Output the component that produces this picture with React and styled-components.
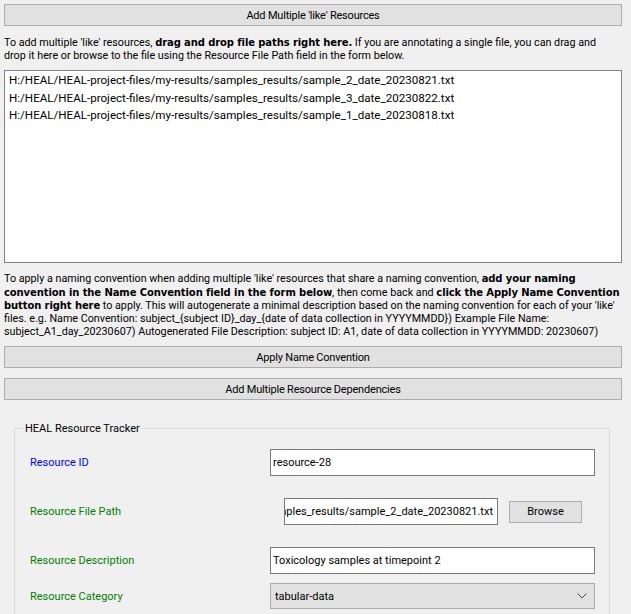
import React from 'react';
import styled, { createGlobalStyle } from 'styled-components';

const GlobalStyle = createGlobalStyle`
  html, body {
    margin: 0;
    padding: 0;
    background: #f0f0f0;
  }
  body {
    font-family: Roboto, "Liberation Sans", sans-serif;
    color: #000;
  }
`;

const Page = styled.div`
  width: 631px;
  height: 614px;
  overflow: hidden;
  box-sizing: border-box;
  padding: 4px 9px 0 4px;
  background: #f0f0f0;
`;

const WideButton = styled.div`
  height: 22px;
  box-sizing: border-box;
  margin-top: ${p => p.top || 0}px;
  border: 1px solid #adadad;
  background: #e1e1e1;
  display: flex;
  align-items: center;
  justify-content: center;
  font-size: 11px;
  letter-spacing: -0.2px;
`;

const Hint = styled.div`
  margin-top: ${p => p.top || 0}px;
  font-size: 10.75px;
  line-height: 13.2px;
`;

const HintLine = styled.span`
  display: block;
  white-space: nowrap;
`;

const Strong = styled.b`
  font-family: "DejaVu Sans", sans-serif;
  font-weight: 700;
  font-size: 10px;
  letter-spacing: -0.1px;
`;

const ListBox = styled.div`
  height: 193px;
  box-sizing: border-box;
  margin-top: 8px;
  border: 1px solid #828282;
  background: #fff;
  padding: 1px 0 0 4px;
`;

const ListItem = styled.div`
  font-size: 11.6px;
  line-height: 17.5px;
  white-space: nowrap;
`;

const Group = styled.fieldset`
  margin: 22px 0 0 10px;
  width: 596px;
  box-sizing: border-box;
  border: 1px solid #dcdcdc;
  padding: 6px 14px 0 15px;
  height: 200px;
`;

const GroupTitle = styled.legend`
  font-size: 11px;
  padding: 0 1px;
  margin-left: -6px;
  color: #000;
`;

const Row = styled.div`
  display: grid;
  grid-template-columns: 240px 1fr;
  align-items: center;
  margin-top: ${p => p.top || 0}px;
`;

const Label = styled.div`
  font-size: 11px;
  color: ${p => (p.required ? '#0000ff' : '#008000')};
`;

const TextBox = styled.div`
  height: 27px;
  box-sizing: border-box;
  border: 1px solid #7a7a7a;
  background: #fff;
  display: flex;
  align-items: center;
  padding: 0 4px 0 2px;
  font-size: 11px;
  white-space: nowrap;
  overflow: hidden;
  width: ${p => (p.width ? `${p.width}px` : 'auto')};
`;

const PathBox = styled(TextBox)`
  justify-content: flex-end;
  margin-left: 14px;
`;

const FileRow = styled.div`
  display: flex;
  align-items: center;
  gap: 11px;
`;

const SmallButton = styled.div`
  width: 73px;
  height: 22px;
  box-sizing: border-box;
  border: 1px solid #adadad;
  background: #e1e1e1;
  display: flex;
  align-items: center;
  justify-content: center;
  font-size: 11px;
`;

const Combo = styled.div`
  height: 26px;
  box-sizing: border-box;
  border: 1px solid #adadad;
  background: #e1e1e1;
  display: flex;
  align-items: center;
  justify-content: space-between;
  padding: 0 7px 0 4px;
  font-size: 11px;
`;

const Chevron = () => (
  <svg width="10" height="6" viewBox="0 0 10 6">
    <polyline points="0.5,0.5 5,5 9.5,0.5" fill="none" stroke="#444" strokeWidth="1" />
  </svg>
);

const files = [
  'H:/HEAL/HEAL-project-files/my-results/samples_results/sample_2_date_20230821.txt',
  'H:/HEAL/HEAL-project-files/my-results/samples_results/sample_3_date_20230822.txt',
  'H:/HEAL/HEAL-project-files/my-results/samples_results/sample_1_date_20230818.txt',
];

export default function App() {
  return (
    <Page>
      <GlobalStyle />
      <WideButton>Add Multiple 'like' Resources</WideButton>
      <Hint top={10}>
        <HintLine>
          To add multiple 'like' resources, <Strong>drag and drop file paths right here.</Strong> If you are annotating a single file, you can drag and
        </HintLine>
        <HintLine>drop it here or browse to the file using the Resource File Path field in the form below.</HintLine>
      </Hint>
      <ListBox>
        {files.map(f => (
          <ListItem key={f}>{f}</ListItem>
        ))}
      </ListBox>
      <Hint top={9}>
        <HintLine>
          To apply a naming convention when adding multiple 'like' resources that share a naming convention, <Strong>add your naming</Strong>
        </HintLine>
        <HintLine>
          <Strong>convention in the Name Convention field in the form below</Strong>, then come back and <Strong>click the Apply Name Convention</Strong>
        </HintLine>
        <HintLine>
          <Strong>button right here</Strong> to apply. This will autogenerate a minimal description based on the naming convention for each of your 'like'
        </HintLine>
        <HintLine>
          files. e.g. Name Convention: subject_{'{'}subject ID{'}'}_day_{'{'}date of data collection in YYYYMMDD{'}'}) Example File Name:
        </HintLine>
        <HintLine>
          subject_A1_day_20230607) Autogenerated File Description: subject ID: A1, date of data collection in YYYYMMDD: 20230607)
        </HintLine>
      </Hint>
      <WideButton top={8}>Apply Name Convention</WideButton>
      <WideButton top={10}>Add Multiple Resource Dependencies</WideButton>
      <Group>
        <GroupTitle>HEAL Resource Tracker</GroupTitle>
        <Row top={8}>
          <Label required>Resource ID</Label>
          <TextBox>resource-28</TextBox>
        </Row>
        <Row top={22}>
          <Label>Resource File Path</Label>
          <FileRow>
            <PathBox width={214}>{files[0]}</PathBox>
            <SmallButton>Browse</SmallButton>
          </FileRow>
        </Row>
        <Row top={22}>
          <Label>Resource Description</Label>
          <TextBox>Toxicology samples at timepoint 2</TextBox>
        </Row>
        <Row top={9}>
          <Label>Resource Category</Label>
          <Combo>
            tabular-data
            <Chevron />
          </Combo>
        </Row>
      </Group>
    </Page>
  );
}
